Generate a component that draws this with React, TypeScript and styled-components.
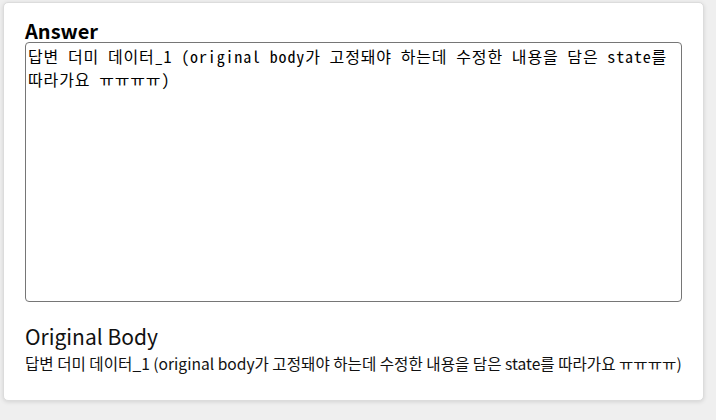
import styled, { createGlobalStyle } from 'styled-components'
import { useState } from 'react'

const GlobalStyle = createGlobalStyle`
    body {
        margin: 0;
        background-color: #efefef;
        font-family: "Noto Sans CJK KR", "Noto Sans", sans-serif;
        color: #111;
    }
`

const Page = styled.div`
    padding: 2px 0 0 3px;
    width: 716px;
    height: 420px;
    box-sizing: border-box;
    overflow: hidden;
`

const Card = styled.div`
    box-sizing: border-box;
    width: 701px;
    height: 399px;
    background-color: #fff;
    border: 1px solid #dcdcdc;
    border-radius: 5px;
    box-shadow: 0 1px 4px rgba(0, 0, 0, 0.12);
    padding: 17px 21px 0 21px;
    display: flex;
    flex-direction: column;
`

const Label = styled.label`
    font-weight: bold;
    font-size: 20px;
    line-height: 22px;
    color: #000;
`

const AnswerInput = styled.textarea`
    box-sizing: border-box;
    width: 657px;
    height: 260px;
    margin: 0;
    padding: 2px;
    resize: none;
    border: 1px solid #767676;
    border-radius: 4px;
    font-family: "Noto Sans Mono CJK KR", "DejaVu Sans Mono", "Noto Sans CJK KR", monospace;
    font-size: 16px;
    line-height: 23px;
    letter-spacing: 0.85px;
    color: #000;
    outline: none;
`

const Title = styled.h3`
    margin: 20px 0 0 0;
    font-size: 21px;
    font-weight: normal;
    line-height: 28px;
    color: #111;
`

const Body = styled.p`
    margin: 2px 0 0 0;
    font-size: 15.6px;
    line-height: 22px;
    color: #111;
`

const original = '답변 더미 데이터_1 (original body가 고정돼야 하는데 수정한 내용을 담은 state를 따라가요 ㅠㅠㅠㅠ)'

export default function App() {
    const [answer, setAnswer] = useState(original)

    return (
        <Page>
            <GlobalStyle />
            <Card>
                <Label htmlFor="answer">Answer</Label>
                <AnswerInput
                    id="answer"
                    value={answer}
                    onChange={(e) => setAnswer(e.target.value)}
                />
                <Title>Original Body</Title>
                <Body>{original}</Body>
            </Card>
        </Page>
    )
}
